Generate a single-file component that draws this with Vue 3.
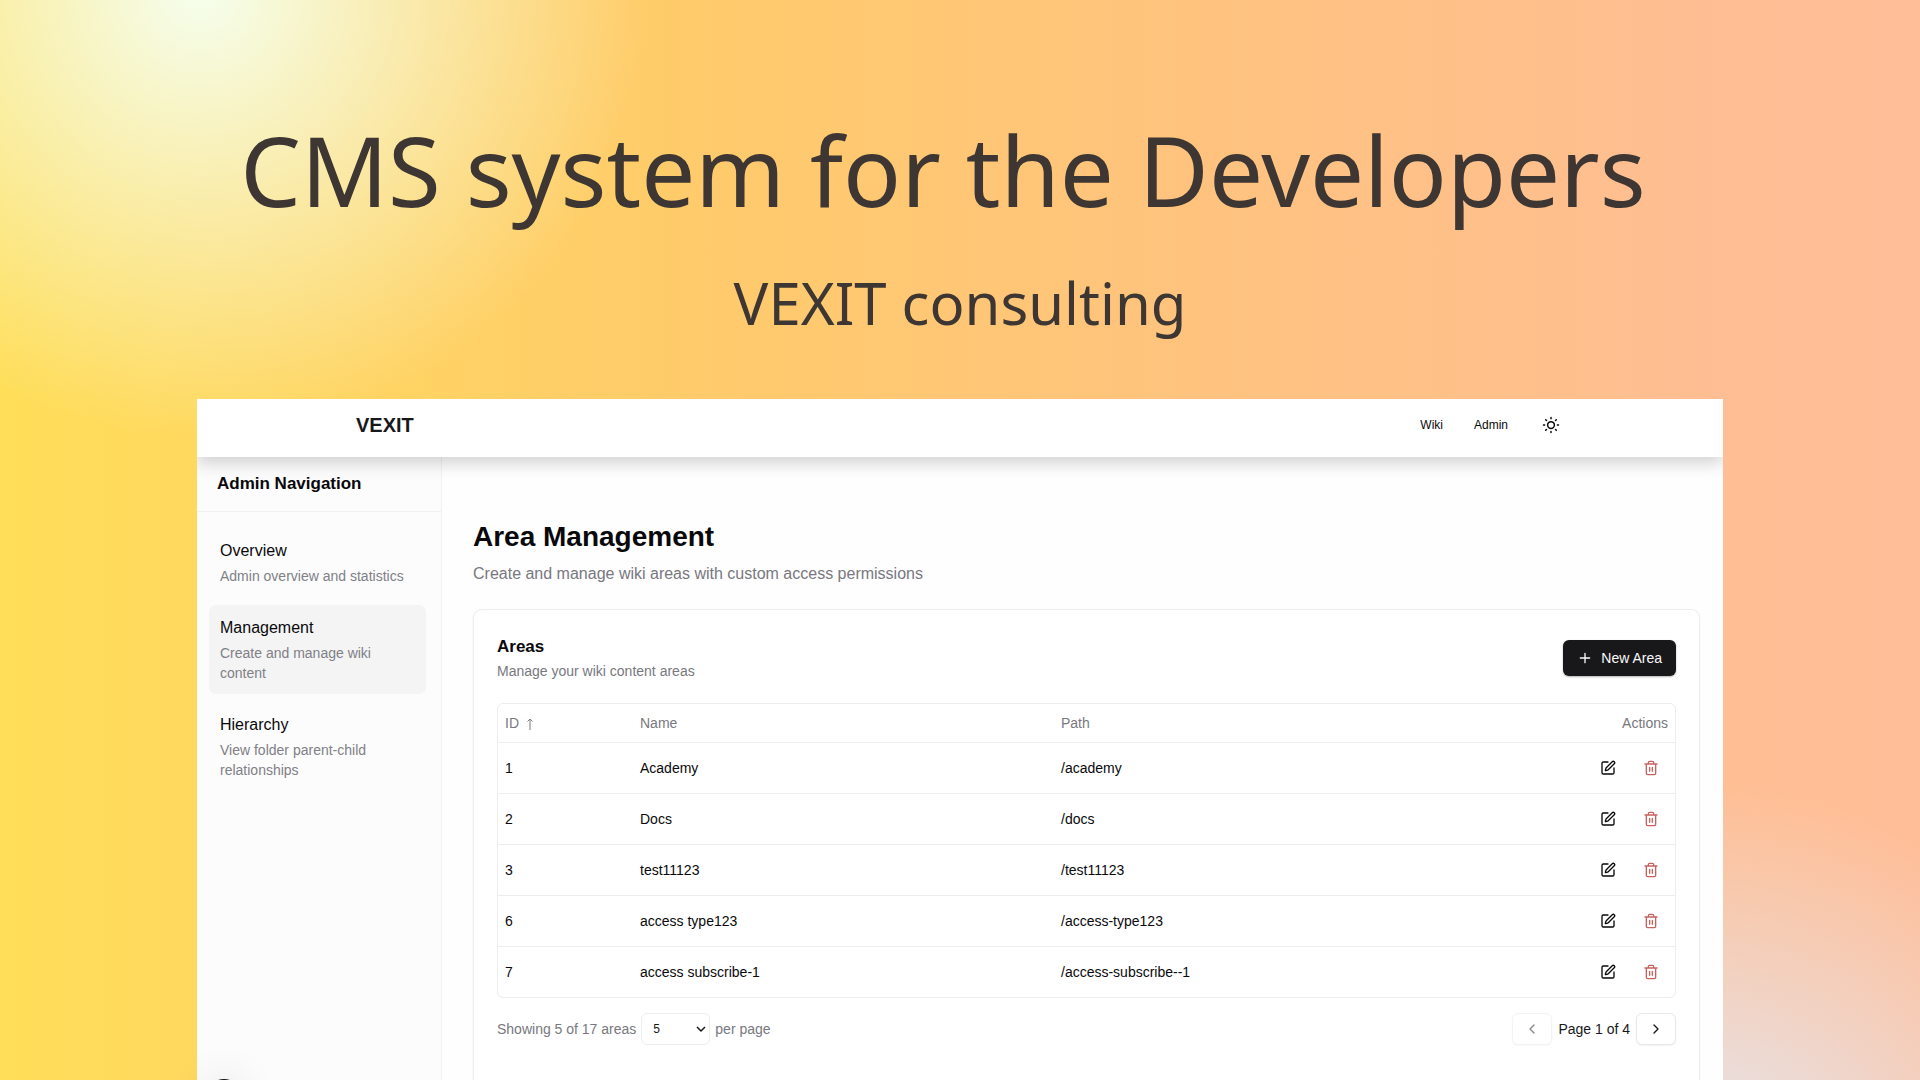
<script setup>
import { ref } from 'vue'

const navItems = [
  { title: 'Overview', text: 'Admin overview and statistics' },
  { title: 'Management', text: 'Create and manage wiki content', active: true },
  { title: 'Hierarchy', text: 'View folder parent-child relationships' },
]

const areas = [
  { id: 1, name: 'Academy', path: '/academy' },
  { id: 2, name: 'Docs', path: '/docs' },
  { id: 3, name: 'test11123', path: '/test11123' },
  { id: 6, name: 'access type123', path: '/access-type123' },
  { id: 7, name: 'access subscribe-1', path: '/access-subscribe--1' },
]

const perPage = ref('5')
</script>

<template>
  <div class="page">
    <div class="hero">
      <h1>CMS system for the Developers</h1>
      <p>VEXIT consulting</p>
    </div>

    <div class="panel">
      <header class="topbar">
        <a class="brand" href="#">VEXIT</a>
        <nav class="top-links">
          <a href="#">Wiki</a>
          <a href="#">Admin</a>
          <button class="icon-btn theme" type="button" aria-label="Toggle theme">
            <svg width="18" height="18" viewBox="0 0 24 24" class="stroke">
              <circle cx="12" cy="12" r="4.500" />
              <path d="M12 2v1.500M12 20.500V22M2 12h1.500M20.500 12H22M4.900 4.900l1.100 1.100M18 18l1.100 1.100M4.900 19.100L6 18M18 6l1.100-1.100" />
            </svg>
          </button>
        </nav>
      </header>

      <div class="body">
        <aside class="sidebar">
          <h2>Admin Navigation</h2>
          <nav class="side-links">
            <a v-for="item in navItems" :key="item.title" href="#" :class="{ active: item.active }">
              <span class="link-title">{{ item.title }}</span>
              <span class="link-text">{{ item.text }}</span>
            </a>
          </nav>
          <button class="dev-badge" type="button" aria-label="Open developer tools"></button>
        </aside>

        <main class="content">
          <h2 class="title">Area Management</h2>
          <p class="subtitle">Create and manage wiki areas with custom access permissions</p>

          <section class="card">
            <div class="card-head">
              <div>
                <h3>Areas</h3>
                <p>Manage your wiki content areas</p>
              </div>
              <button class="new-area" type="button">
                <svg width="16" height="16" viewBox="0 0 24 24" class="stroke"><path d="M5 12h14M12 5v14" /></svg>
                New Area
              </button>
            </div>

            <div class="table-wrap">
              <table>
                <thead>
                  <tr>
                    <th class="col-id">
                      ID
                      <svg width="8" height="12" viewBox="0 0 8 12" class="sort"><path d="M4 12V1M1.500 3.500L4 1l2.500 2.500" /></svg>
                    </th>
                    <th class="col-name">Name</th>
                    <th>Path</th>
                    <th class="col-actions">Actions</th>
                  </tr>
                </thead>
                <tbody>
                  <tr v-for="area in areas" :key="area.id">
                    <td>{{ area.id }}</td>
                    <td>{{ area.name }}</td>
                    <td>{{ area.path }}</td>
                    <td>
                      <div class="actions">
                        <button class="icon-btn" type="button" :aria-label="'Edit ' + area.name">
                          <svg width="16" height="16" viewBox="0 0 24 24" class="stroke">
                            <path d="M12 3H5a2 2 0 0 0-2 2v14a2 2 0 0 0 2 2h14a2 2 0 0 0 2-2v-7" />
                            <path d="M18.375 2.625a1 1 0 0 1 3 3l-9.013 9.014a2 2 0 0 1-.853.505l-2.873.84a.5.5 0 0 1-.62-.62l.84-2.873a2 2 0 0 1 .506-.852z" />
                          </svg>
                        </button>
                        <button class="icon-btn danger" type="button" :aria-label="'Delete ' + area.name">
                          <svg width="16" height="16" viewBox="0 0 24 24" class="stroke">
                            <path d="M3 6h18M19 6v14a2 2 0 0 1-2 2H7a2 2 0 0 1-2-2V6M8 6V4a2 2 0 0 1 2-2h4a2 2 0 0 1 2 2v2M10 11v6M14 11v6" />
                          </svg>
                        </button>
                      </div>
                    </td>
                  </tr>
                </tbody>
              </table>
            </div>

            <div class="pager">
              <label for="per-page">Showing 5 of 17 areas</label>
              <div class="select-box">
                <select id="per-page" v-model="perPage">
                  <option>5</option>
                  <option>10</option>
                  <option>20</option>
                </select>
                <svg width="10" height="10" viewBox="0 0 10 10" class="chevron"><path d="M1 3l4 4 4-4" /></svg>
              </div>
              <span>per page</span>
              <div class="pages">
                <button class="page-btn" type="button" disabled aria-label="Previous page">
                  <svg width="16" height="16" viewBox="0 0 24 24" class="stroke"><path d="M15 18l-6-6 6-6" /></svg>
                </button>
                <span>Page 1 of 4</span>
                <button class="page-btn" type="button" aria-label="Next page">
                  <svg width="16" height="16" viewBox="0 0 24 24" class="stroke"><path d="M9 18l6-6-6-6" /></svg>
                </button>
              </div>
            </div>
          </section>
        </main>
      </div>
    </div>
  </div>
</template>

<style>
body {
  margin: 0;
}
</style>

<style scoped>
* {
  box-sizing: border-box;
}

.page {
  height: 100vh;
  overflow: hidden;
  display: flex;
  flex-direction: column;
  font-family: "Liberation Sans", Arial, sans-serif;
  font-size: 14px;
  line-height: 20px;
  color: #09090b;
  background:
    radial-gradient(circle 448px at 200px -10px, #f5ffee 0%, rgba(245, 255, 238, 0) 100%),
    radial-gradient(circle 440px at 1690px 1220px, #e1ebfb 0%, rgba(225, 235, 251, 0) 100%),
    linear-gradient(90deg, #ffde59 0%, #ffcb6b 36%, #ffc37e 62%, #ffbe92 88%, #ffbe98 100%);
}

h1,
h2,
h3,
p {
  margin: 0;
}

a {
  color: inherit;
  text-decoration: none;
}

button,
select {
  font: inherit;
  color: inherit;
}

.stroke {
  fill: none;
  stroke: currentColor;
  stroke-width: 2;
  stroke-linecap: round;
  stroke-linejoin: round;
}

.hero {
  height: 399px;
  flex: none;
  padding-top: 104px;
  font-family: "Noto Sans", sans-serif;
  color: #3d3632;
  text-align: center;
}

.hero h1 {
  padding-right: 34px;
  font-size: 96px;
  font-weight: 400;
  line-height: 132px;
}

.hero p {
  margin-top: 27px;
  font-size: 58px;
  line-height: 80px;
}

.panel {
  flex: 1;
  min-height: 0;
  margin: 0 197px;
  display: flex;
  flex-direction: column;
  background: #fefefe;
}

.topbar {
  position: relative;
  z-index: 1;
  flex: none;
  height: 58px;
  padding: 0 156px 6px 159px;
  display: flex;
  align-items: center;
  justify-content: space-between;
  background: #fff;
  box-shadow: 0 6px 16px rgba(0, 0, 0, 0.18);
  clip-path: inset(0 0 -40px 0);
}

.brand {
  font-size: 20px;
  font-weight: 700;
  color: #18181b;
}

.top-links {
  display: flex;
  align-items: center;
  gap: 31px;
  font-size: 12px;
}

.icon-btn {
  width: 32px;
  height: 32px;
  padding: 0;
  display: flex;
  align-items: center;
  justify-content: center;
  border: 0;
  background: none;
}

.theme {
  margin-left: -4px;
}

.body {
  flex: 1;
  min-height: 0;
  display: flex;
}

.sidebar {
  position: relative;
  flex: none;
  width: 245px;
  background: #fcfcfc;
  border-right: 1px solid #f1f1f2;
}

.sidebar h2 {
  padding: 16px 20px 17px;
  font-size: 17px;
  line-height: 21px;
  border-bottom: 1px solid #f1f1f2;
}

.side-links {
  padding: 16px 15px 0 12px;
  display: flex;
  flex-direction: column;
  gap: 8px;
}

.side-links a {
  padding: 12px 11px 11px;
  border-radius: 7px;
}

.side-links .active {
  background: #f4f4f5;
}

.link-title,
.link-text {
  display: block;
}

.link-title {
  font-size: 16px;
  line-height: 22px;
  margin-bottom: 4px;
}

.link-text {
  color: #808086;
}

.dev-badge {
  position: absolute;
  left: 9px;
  top: 622px;
  width: 36px;
  height: 36px;
  padding: 0;
  border: 0;
  border-radius: 50%;
  background: #111;
  box-shadow: 0 0 40px rgba(0, 0, 0, 0.12);
}

.content {
  flex: 1;
  padding: 60px 23px 0 31px;
}

.title {
  font-size: 28px;
  line-height: 40px;
}

.subtitle {
  margin-top: 5px;
  font-size: 16px;
  line-height: 24px;
  color: #78787e;
}

.card {
  margin-top: 23px;
  padding: 25px 23px 64px;
  border: 1px solid #eeeef0;
  border-radius: 9px;
  background: #fff;
  box-shadow: 0 1px 3px rgba(0, 0, 0, 0.05);
}

.card-head {
  display: flex;
  align-items: center;
  justify-content: space-between;
}

.card-head h3 {
  font-size: 17px;
  line-height: 24px;
}

.card-head p {
  margin-top: 2px;
  color: #78787e;
}

.new-area {
  height: 36px;
  padding: 0 14px;
  display: flex;
  align-items: center;
  gap: 8px;
  border: 0;
  border-radius: 6px;
  background: #18181b;
  color: #fafafa;
  box-shadow: 0 1px 2px rgba(0, 0, 0, 0.3);
}

.table-wrap {
  margin-top: 22px;
  border: 1px solid #ededef;
  border-radius: 6px;
}

table {
  width: 100%;
  table-layout: fixed;
  border-collapse: collapse;
}

th {
  height: 38px;
  padding: 0 7px;
  text-align: left;
  font-weight: 400;
  color: #78787e;
}

td {
  height: 51px;
  padding: 0 7px;
  border-top: 1px solid #ededef;
}

.col-id {
  width: 135px;
}

.col-name {
  width: 421px;
}

.col-actions {
  width: 240px;
  text-align: right;
}

.sort {
  margin-left: 3px;
  vertical-align: -2px;
  fill: none;
  stroke: currentColor;
}

.actions {
  display: flex;
  justify-content: flex-end;
  gap: 11px;
  padding-right: 1px;
}

.danger {
  color: #c8625f;
}

.pager {
  margin-top: 15px;
  display: flex;
  align-items: center;
  gap: 5px;
  color: #78787e;
}

.select-box {
  position: relative;
  display: flex;
}

.select-box select {
  width: 69px;
  height: 32px;
  padding: 0 11px;
  appearance: none;
  border: 1px solid #ededef;
  border-radius: 6px;
  background: #fff;
  color: #18181b;
  font-size: 12px;
}

.chevron {
  position: absolute;
  right: 4px;
  top: 11px;
  fill: none;
  stroke: #18181b;
  stroke-width: 1.5;
  pointer-events: none;
}

.pages {
  margin-left: auto;
  display: flex;
  align-items: center;
  gap: 6px;
  color: #18181b;
}

.page-btn {
  width: 40px;
  height: 32px;
  padding: 0;
  display: flex;
  align-items: center;
  justify-content: center;
  border: 1px solid #e8e8ea;
  border-radius: 6px;
  background: #fff;
  box-shadow: 0 1px 2px rgba(0, 0, 0, 0.06);
}

.page-btn:disabled {
  opacity: 0.5;
}
</style>
